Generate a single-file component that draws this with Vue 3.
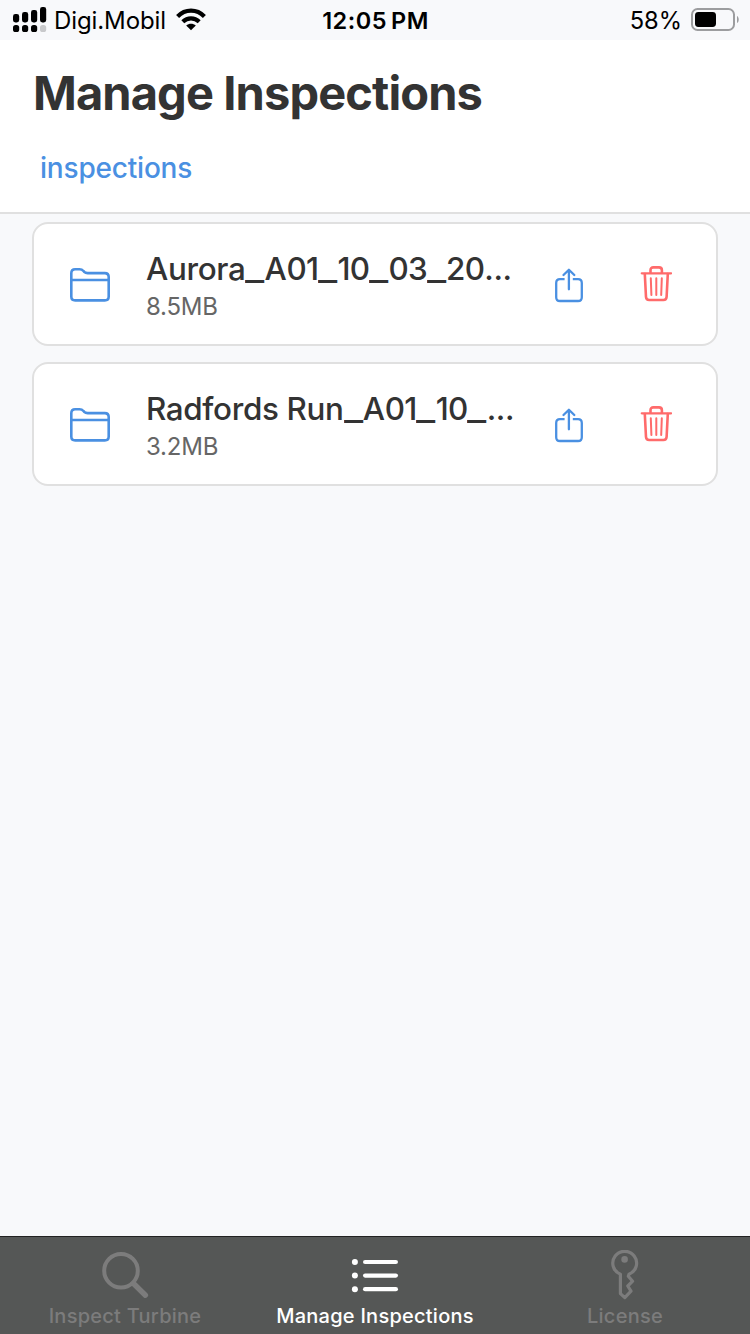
<script setup>
const inspections = [
  { name: 'Aurora_A01_10_03_20...', size: '8.5MB' },
  { name: 'Radfords Run_A01_10_...', size: '3.2MB' },
]
// Underscores and digit groups carry their own widths and tracking.
const parts = (name) => name.split(/(_|\d+)/).filter(Boolean)
const partClass = (part) => ({ underscore: part === '_', digits: /^\d+$/.test(part), dots: part === '...' })
</script>

<template>
  <div class="screen">
    <div class="status">
      <div class="status-left">
        <svg class="signal" width="34" height="26" viewBox="0 0 34 26">
          <rect x="0" y="7" width="6.2" height="8.4" rx="2.4" />
          <rect x="9" y="5" width="6.2" height="10.4" rx="2.4" />
          <rect x="18" y="3" width="6.2" height="12.4" rx="2.4" />
          <rect x="27" y="0" width="6.2" height="15.4" rx="2.4" />
          <rect x="0" y="18" width="6.2" height="7" rx="2.6" />
          <rect x="9" y="18" width="6.2" height="7" rx="2.6" />
          <rect x="18" y="18" width="6.2" height="7" rx="2.6" />
          <rect x="27" y="18" width="6.2" height="7" rx="2.6" fill="#c8c9cb" />
        </svg>
        <span class="carrier">Digi.Mobil</span>
        <svg class="wifi" width="30" height="23" viewBox="0 0 30 23">
          <g fill="none" stroke="#000" stroke-width="4.2">
            <path d="M1.6 8.5C9.2 .7 20.8 .7 28.4 8.5" />
            <path d="M6.8 13.8C11.5 9.3 18.5 9.3 23.2 13.8" />
          </g>
          <path d="M15 22.3L10.2 17.5C13 15.2 17 15.2 19.8 17.5Z" />
        </svg>
      </div>
      <span class="clock">12:05<i></i>PM</span>
      <div class="status-right">
        <span class="percent">58%</span>
        <svg width="49" height="24" viewBox="0 0 49 24">
          <rect x="1" y="1" width="42" height="21" rx="5.6" fill="none" stroke="#9c9d9f" stroke-width="2" />
          <rect x="4" y="4" width="21" height="15" rx="3.4" />
          <path d="M46 8C48.3 9 48.3 14 46 15Z" fill="#9c9d9f" />
        </svg>
      </div>
    </div>

    <header class="header">
      <h1>Manage Inspections</h1>
      <a class="crumb">inspections</a>
    </header>

    <main class="list">
      <article v-for="item in inspections" :key="item.name" class="card">
        <svg class="folder" width="40" height="34" viewBox="0 0 40 34">
          <g fill="none" stroke="#4a90e2" stroke-width="2.6">
            <path d="M1.3 28.5V5.2Q1.3 1.3 5.2 1.3H9.4Q12 1.3 13.4 3L14.4 4Q15.6 5.1 17.6 5.1H34.8Q38.7 5.1 38.7 9V28.5Q38.7 32.4 34.8 32.4H5.2Q1.3 32.4 1.3 28.5Z" />
            <path d="M1.3 12H38.7" />
          </g>
        </svg>
        <div class="info">
          <div class="name"><span v-for="(part, i) in parts(item.name)" :key="i" :class="partClass(part)">{{ part }}</span></div>
          <div class="size">{{ item.size }}</div>
        </div>
        <svg class="share" width="28" height="35" viewBox="0 0 28 35">
          <g fill="none" stroke="#4a90e2" stroke-width="2.3" stroke-linecap="round" stroke-linejoin="round">
            <path stroke-linecap="butt" d="M9.6 11.2H5Q1.2 11.2 1.2 15V29.2Q1.2 33 5 33H23Q26.8 33 26.8 29.2V15Q26.8 11.2 23 11.2H17.8" />
            <path d="M13.9 21.3V2M8.5 7L13.9 1.7L19.3 7" />
          </g>
        </svg>
        <svg class="trash" width="32" height="36" viewBox="0 0 32 36">
          <g fill="none" stroke="#ff6b6b" stroke-linecap="round" stroke-linejoin="round">
            <path stroke-width="2.3" d="M1.8 7.3H31" />
            <path stroke-width="2.6" d="M10.5 6.5V4.3Q10.5 1.4 13.4 1.4H19Q21.9 1.4 21.9 4.3V6.5" />
            <path stroke-width="2.6" d="M4.8 8L6 31Q6.2 34 9.2 34H23.4Q26.4 34 26.6 31L27.8 8" />
            <path stroke-width="2" d="M10.8 12.3L11.4 29M16.3 12.3V29M21.8 12.3L21.2 29" />
          </g>
        </svg>
      </article>
    </main>

    <nav class="tabs">
      <div class="tab">
        <svg width="50" height="52" viewBox="0 0 50 52">
          <g fill="none" stroke="#7c7c7c">
            <circle cx="21" cy="20.7" r="16.8" stroke-width="4" />
            <path d="M33.5 33.5L45.4 45.2" stroke-width="5.4" stroke-linecap="round" />
          </g>
        </svg>
        <span>Inspect Turbine</span>
      </div>
      <div class="tab active">
        <svg width="50" height="52" viewBox="0 0 50 52">
          <g fill="#fff">
            <circle cx="4.9" cy="12" r="3" /><circle cx="4.9" cy="25.6" r="3" /><circle cx="4.9" cy="39.2" r="3" />
            <rect x="13" y="9.9" width="35" height="4.2" rx="2.1" />
            <rect x="13" y="23.5" width="35" height="4.2" rx="2.1" />
            <rect x="13" y="37.1" width="35" height="4.2" rx="2.1" />
          </g>
        </svg>
        <span>Manage Inspections</span>
      </div>
      <div class="tab">
        <svg width="50" height="52" viewBox="0 0 50 52">
          <path d="M20.4 24.3A11.9 11.9 0 1 1 29 24.3L28.3 26.2L32.6 31.2L27.8 36L31 41.2L24.8 47.6L20.4 43.6Z" fill="none" stroke="#7c7c7c" stroke-width="3.2" stroke-linejoin="round" />
          <circle cx="24.6" cy="9.4" r="3.3" fill="#7c7c7c" />
        </svg>
        <span>License</span>
      </div>
    </nav>
  </div>
</template>

<style>
body { margin: 0; }
</style>

<style scoped>
.screen {
  width: 750px;
  height: 1334px;
  display: flex;
  flex-direction: column;
  background: #f8f9fb;
  font-family: Inter, "Liberation Sans", sans-serif;
  color: #333;
  overflow: hidden;
}
svg { display: block; flex: none; }
.status {
  height: 40px;
  flex: none;
  display: grid;
  grid-template-columns: 1fr auto 1fr;
  align-items: center;
  padding: 0 10px 0 13px;
  color: #000;
  font-size: 24px;
  line-height: 40px;
  white-space: nowrap;
}
.status span { padding-top: 2px; line-height: 38px; }
.status-left { display: flex; align-items: center; }
.signal { margin-top: -1px; }
.carrier { margin-left: 7px; width: 112px; letter-spacing: -0.1px; }
.wifi { margin-left: 10px; margin-top: -1px; }
.clock { font-size: 23.5px; font-weight: 600; letter-spacing: 0.5px; margin-left: -2px; }
.clock i { display: inline-block; width: 4px; }
.status-right { display: flex; align-items: center; justify-content: flex-end; gap: 9px; }
.status-right svg { margin-top: -1px; }
.percent { font-size: 23.7px; }
.header {
  height: 172px;
  flex: none;
  background: #fff;
  border-bottom: 2px solid #e0e0e0;
}
h1 {
  margin: 23px 0 0 33px;
  font-size: 47px;
  line-height: 60px;
  font-weight: 700;
  letter-spacing: -0.88px;
}
.crumb {
  display: block;
  margin: 27px 0 0 40px;
  font-size: 28px;
  line-height: 36px;
  font-weight: 500;
  letter-spacing: -0.2px;
  color: #4a90e2;
}
.list { flex: 1; padding: 8px 32px; display: flex; flex-direction: column; gap: 16px; }
.card {
  box-sizing: border-box;
  height: 124px;
  display: flex;
  align-items: center;
  background: #fff;
  border: 2px solid #e0e0e0;
  border-radius: 16px;
  padding: 0 44px 0 36px;
}
.folder { margin-top: 1px; }
.info { margin-left: 36px; width: 376px; padding-top: 5px; white-space: nowrap; }
.name { font-size: 31.4px; line-height: 40px; font-weight: 500; letter-spacing: -0.35px; }
.digits { letter-spacing: -0.75px; }
.dots { letter-spacing: -0.3px; }
.underscore {
  display: inline-block;
  width: 19.2px;
  letter-spacing: 0;
  transform: scaleX(1.32);
  transform-origin: 0 50%;
}
.size { font-size: 24px; line-height: 36px; letter-spacing: -0.2px; color: #666; }
.share { margin: 2px 0 0 32.6px; }
.trash { margin-left: auto; }
.tabs {
  box-sizing: border-box;
  height: 98px;
  flex: none;
  display: grid;
  grid-template-columns: repeat(3, 1fr);
  background: #555756;
  border-top: 1px solid #222;
  color: #7c7c7c;
}
.tab { display: flex; flex-direction: column; align-items: center; padding-top: 13px; }
.tab span { font-size: 20px; line-height: 26px; margin-top: 1px; font-weight: 500; letter-spacing: 0.25px; white-space: nowrap; }
.tab.active { color: #fff; }
</style>
